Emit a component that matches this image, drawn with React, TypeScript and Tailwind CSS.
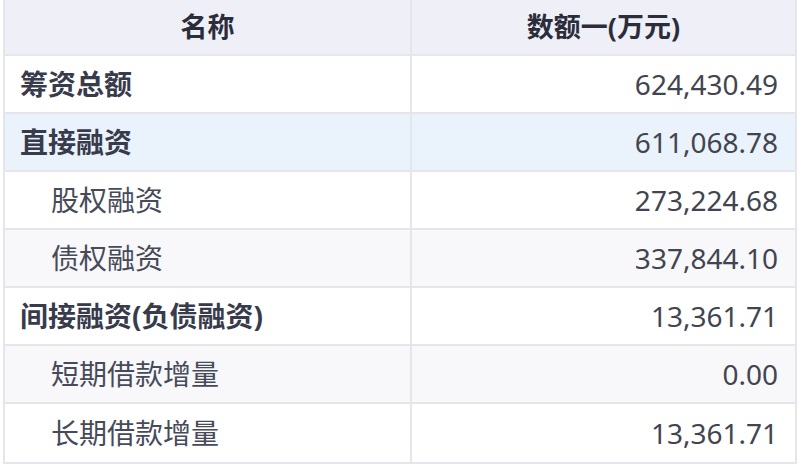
import React from 'react';

interface Row {
  name: string;
  value: string;
  bold?: boolean;
  indent?: boolean;
  bg: string;
}

const rows: Row[] = [
  { name: '筹资总额', value: '624,430.49', bold: true, bg: 'bg-white' },
  { name: '直接融资', value: '611,068.78', bold: true, bg: 'bg-[#eaf2fc]' },
  { name: '股权融资', value: '273,224.68', indent: true, bg: 'bg-white' },
  { name: '债权融资', value: '337,844.10', indent: true, bg: 'bg-[#f8f8fb]' },
  { name: '间接融资(负债融资)', value: '13,361.71', bold: true, bg: 'bg-white' },
  { name: '短期借款增量', value: '0.00', indent: true, bg: 'bg-[#f8f8fb]' },
  { name: '长期借款增量', value: '13,361.71', indent: true, bg: 'bg-white' },
];

const font = "font-['Noto_Sans','Noto_Sans_CJK_SC',sans-serif]";

export default function App() {
  return (
    <div className={`w-[801px] h-[464px] bg-white pl-[3px] ${font}`}>
      <div className="w-[794px] border-l-2 border-r-2 border-b-2 border-[#e5e6ec]">
        {/* Header */}
        <div className="grid grid-cols-[407px_1fr] h-[56px] bg-[#eff0f7] border-b-2 border-[#e5e6ec]">
          <div className="flex items-center justify-center border-r-2 border-[#e5e6ec] text-[27px] font-bold text-[#2b2d3a]">
            名称
          </div>
          <div className="flex items-center justify-center text-[27px] font-bold text-[#2b2d3a]">
            数额一(万元)
          </div>
        </div>

        {/* Body */}
        {rows.map((row, i) => (
          <div
            key={row.name}
            className={`grid grid-cols-[407px_1fr] h-[58px] ${row.bg} ${i < rows.length - 1 ? 'border-b-2 border-[#e5e6ec]' : ''}`}
          >
            <div
              className={`flex items-center border-r-2 border-[#e5e6ec] text-[28px] ${
                row.bold ? 'pl-[15px] font-bold text-[#383b4c]' : 'pl-[46px] text-[#474a58]'
              }`}
            >
              {row.name}
            </div>
            <div className="flex items-center justify-end pr-[17px] text-[28px] text-[#42454f]">
              {row.value}
            </div>
          </div>
        ))}
      </div>
    </div>
  );
}
